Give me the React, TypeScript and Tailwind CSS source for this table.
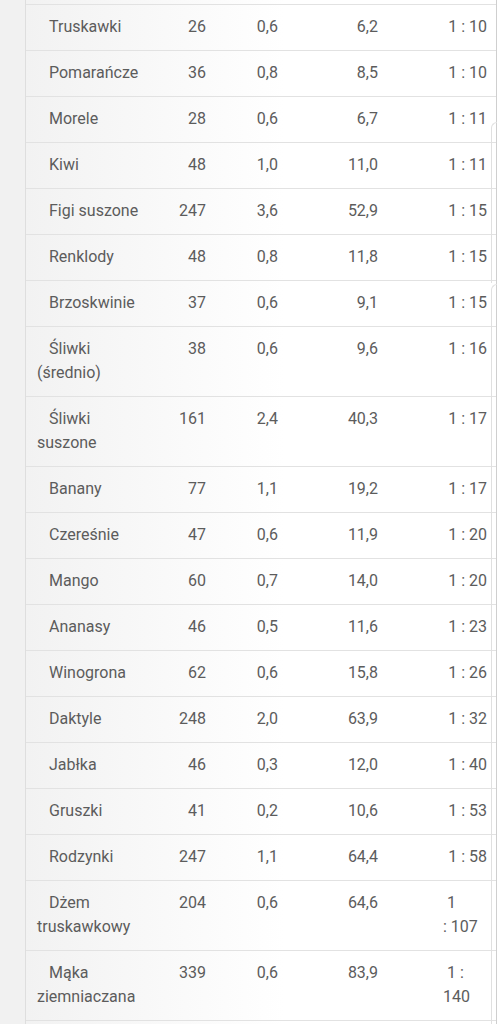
import React from 'react';

type Row = {
  name: string[];
  kcal: string;
  protein: string;
  carbs: string;
  ratio: string[];
};

const ROWS: Row[] = [
  { name: ['Truskawki'], kcal: '26', protein: '0,6', carbs: '6,2', ratio: ['1 : 10'] },
  { name: ['Pomarańcze'], kcal: '36', protein: '0,8', carbs: '8,5', ratio: ['1 : 10'] },
  { name: ['Morele'], kcal: '28', protein: '0,6', carbs: '6,7', ratio: ['1 : 11'] },
  { name: ['Kiwi'], kcal: '48', protein: '1,0', carbs: '11,0', ratio: ['1 : 11'] },
  { name: ['Figi suszone'], kcal: '247', protein: '3,6', carbs: '52,9', ratio: ['1 : 15'] },
  { name: ['Renklody'], kcal: '48', protein: '0,8', carbs: '11,8', ratio: ['1 : 15'] },
  { name: ['Brzoskwinie'], kcal: '37', protein: '0,6', carbs: '9,1', ratio: ['1 : 15'] },
  { name: ['Śliwki', '(średnio)'], kcal: '38', protein: '0,6', carbs: '9,6', ratio: ['1 : 16'] },
  { name: ['Śliwki', 'suszone'], kcal: '161', protein: '2,4', carbs: '40,3', ratio: ['1 : 17'] },
  { name: ['Banany'], kcal: '77', protein: '1,1', carbs: '19,2', ratio: ['1 : 17'] },
  { name: ['Czereśnie'], kcal: '47', protein: '0,6', carbs: '11,9', ratio: ['1 : 20'] },
  { name: ['Mango'], kcal: '60', protein: '0,7', carbs: '14,0', ratio: ['1 : 20'] },
  { name: ['Ananasy'], kcal: '46', protein: '0,5', carbs: '11,6', ratio: ['1 : 23'] },
  { name: ['Winogrona'], kcal: '62', protein: '0,6', carbs: '15,8', ratio: ['1 : 26'] },
  { name: ['Daktyle'], kcal: '248', protein: '2,0', carbs: '63,9', ratio: ['1 : 32'] },
  { name: ['Jabłka'], kcal: '46', protein: '0,3', carbs: '12,0', ratio: ['1 : 40'] },
  { name: ['Gruszki'], kcal: '41', protein: '0,2', carbs: '10,6', ratio: ['1 : 53'] },
  { name: ['Rodzynki'], kcal: '247', protein: '1,1', carbs: '64,4', ratio: ['1 : 58'] },
  { name: ['Dżem', 'truskawkowy'], kcal: '204', protein: '0,6', carbs: '64,6', ratio: ['1', ': 107'] },
  { name: ['Mąka', 'ziemniaczana'], kcal: '339', protein: '0,6', carbs: '83,9', ratio: ['1 :', '140'] },
];

const RatioCell: React.FC<{ lines: string[] }> = ({ lines }) => {
  if (lines.length === 1) {
    return <div className="text-right pr-[9px] whitespace-nowrap">{lines[0]}</div>;
  }
  // wrapped ratio, first line sits a little further in
  return (
    <div className="pl-[55px] whitespace-nowrap">
      <div className="pl-[4px]">{lines[0]}</div>
      <div>{lines[1]}</div>
    </div>
  );
};

export default function App() {
  return (
    <div
      className="relative w-[498px] h-[1024px] overflow-hidden bg-white flex text-[16px] text-[#5c5c5c]"
      style={{ fontFamily: 'Roboto, "Noto Sans", sans-serif' }}
    >
      {/* left page margin */}
      <div className="w-[26px] shrink-0 bg-[#f1f1f1] border-r border-[#dedede]" />

      {/* table */}
      <div className="w-[471px] shrink-0 border-r border-[#cfcfcf] bg-[linear-gradient(to_right,#f2f2f2,#ffffff_55%)]">
        <div className="h-[5px] border-b border-[#e2e2e2]" />
        {ROWS.map((row, i) => (
          <div
            key={i}
            className="grid grid-cols-[144px_46px_72px_100px_1fr] border-b border-[#e2e2e2] pt-[10px] pb-[11px] leading-[24px]"
          >
            <div className="pl-[11px] whitespace-nowrap">
              <div className="pl-[12px]">{row.name[0]}</div>
              {row.name[1] && <div>{row.name[1]}</div>}
            </div>
            <div className="text-right pr-[10px]">{row.kcal}</div>
            <div className="text-right pr-[10px]">{row.protein}</div>
            <div className="text-right pr-[10px]">{row.carbs}</div>
            <RatioCell lines={row.ratio} />
          </div>
        ))}
      </div>

      {/* fast scroll thumb outline */}
      <div className="absolute left-[491px] top-[122px] w-[6px] h-[161px] border-l border-t border-[#e0e0e0] rounded-tl-[6px]" />
      <div className="absolute left-[491px] top-[284px] w-[6px] bottom-0 border-l border-t border-[#e0e0e0] rounded-tl-[6px]" />
    </div>
  );
}
